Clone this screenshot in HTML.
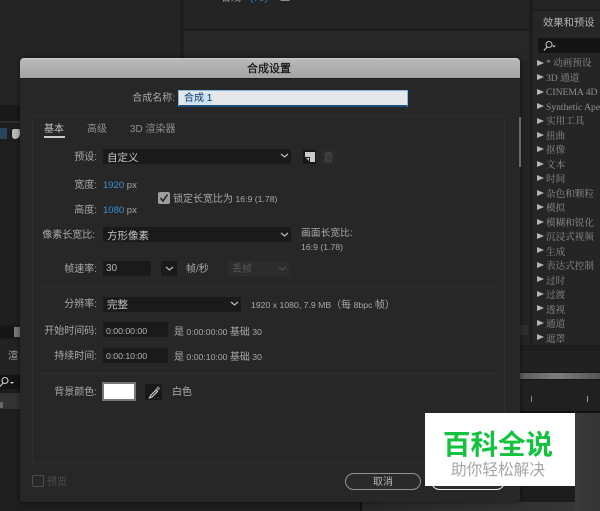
<!DOCTYPE html>
<html lang="zh"><head><meta charset="utf-8"><style>
html,body{margin:0;padding:0;background:#1b1b1b}
#p{position:relative;width:600px;height:511px;overflow:hidden;background:#1d1d1d;font-family:"Liberation Sans","Noto Sans CJK SC",sans-serif;font-size:10px;color:#a8a8a8}
#p div,#p span.t{position:absolute;white-space:nowrap}
.t{line-height:14px}
.t i{font-style:normal;font-size:10px}
.l{text-align:right;width:80px;color:#a8a8a8}
.b{background:#1a1a1a}
.w{color:#c4c4c4}
.v{color:#3d8fd6}
.fx{left:546px;color:#8f8f8f;font-family:"Liberation Serif","Noto Serif CJK SC",serif;font-size:9.6px;line-height:14px}
.ar{left:537px;width:0;height:0;border-left:7px solid #b5b5b5;border-top:3.5px solid transparent;border-bottom:3.5px solid transparent}
svg{position:absolute;overflow:visible}
</style></head><body><div id="p">
<!-- background panels -->
<div style="left:0;top:0;width:180px;height:106px;background:#242424"></div>
<div style="left:184px;top:0;width:345px;height:28px;background:#242424"></div>
<div style="left:184px;top:31px;width:345px;height:30px;background:#272727"></div>
<div style="left:520px;top:61px;width:10px;height:284px;background:#232323"></div>
<div style="left:520px;top:325px;width:8px;height:10px;background:#2e2e2e"></div>
<div style="left:533px;top:0;width:67px;height:9px;background:#242424"></div>
<div style="left:533px;top:11px;width:67px;height:44px;background:#262626"></div>
<div class="t" style="left:221px;top:-8px;color:#999">合成</div>
<div class="t" style="left:250px;top:-8px;color:#3d7fb8">(70)</div>
<div class="t" style="left:280px;top:-8px;color:#999">二</div>
<div class="t" style="left:543px;top:17px;color:#b5b5b5;font-size:10.3px">效果和预设</div>
<div style="left:538px;top:38px;width:62px;height:15px;background:#141414"></div>
<svg style="left:543px;top:40px" width="14" height="12" viewBox="0 0 14 12"><circle cx="6" cy="4.5" r="3" fill="none" stroke="#bbb" stroke-width="1.1"/><path d="M4 7 L1 10.5" stroke="#bbb" stroke-width="1.2"/><path d="M9 5.5h4l-2 2z" fill="#bbb"/></svg>
<div style="left:533px;top:55px;width:67px;height:294px;background:#252525"></div>
<div class="ar" style="top:60px"></div><div class="fx" style="top:57px">* 动画预设</div>
<div class="ar" style="top:74px"></div><div class="fx" style="top:72px">3D 通道</div>
<div class="ar" style="top:89px"></div><div class="fx" style="top:86px">CINEMA 4D</div>
<div class="ar" style="top:103px"></div><div class="fx" style="top:101px">Synthetic Aperture</div>
<div class="ar" style="top:118px"></div><div class="fx" style="top:115px">实用工具</div>
<div class="ar" style="top:132px"></div><div class="fx" style="top:130px">扭曲</div>
<div class="ar" style="top:146px"></div><div class="fx" style="top:144px">抠像</div>
<div class="ar" style="top:161px"></div><div class="fx" style="top:159px">文本</div>
<div class="ar" style="top:175px"></div><div class="fx" style="top:173px">时间</div>
<div class="ar" style="top:190px"></div><div class="fx" style="top:188px">杂色和颗粒</div>
<div class="ar" style="top:204px"></div><div class="fx" style="top:202px">模拟</div>
<div class="ar" style="top:219px"></div><div class="fx" style="top:217px">模糊和锐化</div>
<div class="ar" style="top:233px"></div><div class="fx" style="top:231px">沉浸式视频</div>
<div class="ar" style="top:247px"></div><div class="fx" style="top:246px">生成</div>
<div class="ar" style="top:262px"></div><div class="fx" style="top:260px">表达式控制</div>
<div class="ar" style="top:276px"></div><div class="fx" style="top:275px">过时</div>
<div class="ar" style="top:291px"></div><div class="fx" style="top:289px">过渡</div>
<div class="ar" style="top:305px"></div><div class="fx" style="top:304px">透视</div>
<div class="ar" style="top:320px"></div><div class="fx" style="top:318px">通道</div>
<div class="ar" style="top:334px"></div><div class="fx" style="top:333px">遮罩</div>
<div style="left:520px;top:345px;width:80px;height:6px;background:#1d1d1d"></div>
<div style="left:520px;top:351px;width:80px;height:21px;background:#212121"></div>
<div style="left:520px;top:372px;width:80px;height:8px;background:#171717"></div>
<div style="left:520px;top:373px;width:80px;height:6px;background:linear-gradient(90deg,#5a5a5a,#7d7d7d 45%,#565656)"></div>
<div style="left:520px;top:380px;width:80px;height:32px;background:#202020"></div>
<div style="left:531px;top:396px;width:1px;height:6px;background:#888"></div>
<div style="left:587px;top:396px;width:1px;height:6px;background:#999"></div>
<div style="left:520px;top:411px;width:80px;height:2px;background:#111"></div>
<div style="left:575px;top:413px;width:25px;height:98px;background:linear-gradient(90deg,#3a3a3a,#333)"></div>
<div style="left:362px;top:502px;width:213px;height:9px;background:linear-gradient(90deg,#262626,#363636)"></div>
<div style="left:360px;top:502px;width:2px;height:9px;background:#111"></div>
<!-- left panels -->
<div style="left:0;top:105px;width:20px;height:15px;background:#191919"></div>
<div style="left:0;top:121px;width:20px;height:2px;background:#2a2a2a"></div>
<div style="left:0;top:128px;width:7px;height:11px;background:#27455c"></div>
<div style="left:12px;top:129px;width:8px;height:10px;background:#b8b8b8;border-radius:2px 2px 5px 3px"></div>
<div style="left:0;top:143px;width:20px;height:180px;background:#1f1f1f"></div>
<div style="left:0;top:326px;width:14px;height:12px;background:#151515"></div>
<div style="left:14px;top:327px;width:6px;height:10px;background:#777"></div>
<div style="left:0;top:340px;width:20px;height:34px;background:#232323"></div>
<div class="t" style="left:8px;top:350px;color:#a5a5a5">渲</div>
<div style="left:0;top:375px;width:20px;height:14px;background:#131313"></div>
<svg style="left:0;top:376px" width="16" height="12" viewBox="0 0 16 12"><circle cx="5" cy="4.5" r="3" fill="none" stroke="#ccc" stroke-width="1.1"/><path d="M3 7 L0 10.5" stroke="#ccc" stroke-width="1.2"/><path d="M10 6h4l-2 2z" fill="#ccc"/></svg>
<div style="left:0;top:393px;width:20px;height:16px;background:#333"></div>
<div style="left:0;top:402px;width:3px;height:6px;background:#666"></div>
<div style="left:0;top:413px;width:20px;height:98px;background:#1e1e1e"></div>
<!-- dialog -->
<div style="left:20px;top:58px;width:500px;height:444px;background:#272727;border-radius:4px 4px 3px 3px;box-shadow:0 0 5px rgba(0,0,0,.55);overflow:hidden">
  <div style="left:0;top:0;width:500px;height:20px;background:linear-gradient(#cfcfcf 0,#b8b8b8 2px,#a3a3a3 100%);border-bottom:1px solid #1c1c1c"></div>
</div>
<div class="t" style="left:19px;width:500px;top:62px;text-align:center;color:#111;font-size:11px;-webkit-text-stroke:.25px #111">合成设置</div>
<div class="t l" style="left:95px;top:92px;width:80px;color:#a8a8a8">合成名称:</div>
<div style="left:178px;top:90px;width:230px;height:17px;background:#e5e7e8;border:1px solid #7fb8ea;border-bottom:2px solid #1a4f7d;box-sizing:border-box"></div>
<div class="t" style="left:184px;top:92px;color:#13365a"><span style="background:#cfe3f7">合成 1</span></div>
<div style="left:32px;top:116px;width:473px;height:347px;border:1px solid #2e2e2e;box-sizing:border-box"></div>
<div style="left:519px;top:117px;width:2px;height:50px;background:#6a6a6a"></div>
<div class="t w" style="left:44px;top:123px">基本</div>
<div style="left:44px;top:136px;width:21px;height:2px;background:#c9c9c9"></div>
<div class="t" style="left:87px;top:123px;color:#8f8f8f">高级</div>
<div class="t" style="left:130px;top:123px;color:#8f8f8f">3D 渲染器</div>

<div class="t l" style="left:17px;top:151px">预设:</div>
<div class="b" style="left:103px;top:149px;width:188px;height:15px"></div>
<div class="t w" style="left:107px;top:151px;font-size:10.5px">自定义</div>
<svg style="left:280px;top:153px" width="9" height="6"><path d="M1 1 L4.5 4 L8 1" fill="none" stroke="#bbb" stroke-width="1.2"/></svg>
<div style="left:303px;top:150px;width:13px;height:14px;background:#161616"></div>
<div style="left:305px;top:152px;width:10px;height:10px;background:#c9c9c9"></div>
<svg style="left:305px;top:152px" width="10" height="10"><path d="M0 5h5v5H0z" fill="#161616"/><path d="M1 6l3 3V6z" fill="#c9c9c9"/></svg>
<div style="left:321px;top:149px;width:15px;height:15px;background:#2b2b2b;border-radius:1px"></div>
<svg style="left:324px;top:152px" width="9" height="10"><path d="M0 2h9M3 2V.5h3V2M1.5 2v7.5h6V2" fill="#383838" stroke="#444"/></svg>

<div class="t l" style="left:17px;top:179px">宽度:</div>
<div class="t" style="left:103px;top:179px;font-size:9.5px"><span class="v">1920</span> px</div>
<div class="t l" style="left:17px;top:204px">高度:</div>
<div class="t" style="left:103px;top:204px;font-size:9.5px"><span class="v">1080</span> px</div>
<div style="left:158px;top:192px;width:12px;height:12px;background:#9e9e9e;border-radius:2px"></div>
<svg style="left:159px;top:193px" width="10" height="10"><path d="M1.5 5 L4 8 L8.5 1.5" fill="none" stroke="#1e1e1e" stroke-width="1.5"/></svg>
<div class="t" style="left:173px;top:192px;font-size:8.7px"><i>锁定长宽比为</i> 16:9 (1.78)</div>

<div class="t l" style="left:15px;top:229px">像素长宽比:</div>
<div class="b" style="left:103px;top:227px;width:188px;height:15px"></div>
<div class="t w" style="left:107px;top:229px;font-size:10.5px">方形像素</div>
<svg style="left:280px;top:232px" width="9" height="6"><path d="M1 1 L4.5 4 L8 1" fill="none" stroke="#bbb" stroke-width="1.2"/></svg>
<div class="t" style="left:301px;top:227px;font-size:9.8px">画面长宽比:</div>
<div class="t" style="left:301px;top:240px;font-size:8.7px">16:9 (1.78)</div>

<div class="t l" style="left:17px;top:263px">帧速率:</div>
<div class="b" style="left:103px;top:261px;width:48px;height:15px"></div>
<div class="t" style="left:106px;top:262px;color:#b5b5b5">30</div>
<div class="b" style="left:161px;top:261px;width:16px;height:15px"></div>
<svg style="left:165px;top:266px" width="9" height="6"><path d="M1 1 L4.5 4 L8 1" fill="none" stroke="#bbb" stroke-width="1.2"/></svg>
<div class="t" style="left:186px;top:263px">帧/秒</div>
<div style="left:228px;top:261px;width:62px;height:15px;background:#2c2c2c"></div>
<div class="t" style="left:232px;top:263px;color:#565656">丢帧</div>
<svg style="left:278px;top:266px" width="9" height="6"><path d="M1 1 L4.5 4 L8 1" fill="none" stroke="#4c4c4c" stroke-width="1.2"/></svg>

<div style="left:40px;top:286px;width:456px;height:1px;background:#2f2f2f"></div>
<div class="t l" style="left:17px;top:298px">分辨率:</div>
<div class="b" style="left:103px;top:297px;width:138px;height:15px"></div>
<div class="t w" style="left:107px;top:298px;font-size:10.5px">完整</div>
<svg style="left:230px;top:301px" width="9" height="6"><path d="M1 1 L4.5 4 L8 1" fill="none" stroke="#bbb" stroke-width="1.2"/></svg>
<div class="t" style="left:251px;top:298px;font-size:8.7px">1920 x 1080, 7.9 MB<i>（每</i> 8bpc <i>帧）</i></div>

<div class="t l" style="left:17px;top:325px">开始时间码:</div>
<div class="b" style="left:103px;top:322px;width:65px;height:15px"></div>
<div class="t" style="left:106px;top:324px;color:#b5b5b5;font-size:8.7px">0:00:00:00</div>
<div class="t" style="left:174px;top:325px;font-size:8.7px"><i>是</i> 0:00:00:00 <i>基础</i> 30</div>
<div class="t l" style="left:17px;top:350px">持续时间:</div>
<div class="b" style="left:103px;top:348px;width:65px;height:15px"></div>
<div class="t" style="left:106px;top:349px;color:#b5b5b5;font-size:8.7px">0:00:10:00</div>
<div class="t" style="left:174px;top:350px;font-size:8.7px"><i>是</i> 0:00:10:00 <i>基础</i> 30</div>
<div style="left:40px;top:373px;width:456px;height:1px;background:#2f2f2f"></div>

<div class="t l" style="left:17px;top:386px">背景颜色:</div>
<div style="left:102px;top:382px;width:34px;height:19px;background:#fff;border:2px solid #777;box-sizing:border-box"></div>
<div style="left:145px;top:384px;width:17px;height:16px;background:#181818"></div>
<svg style="left:148px;top:385px" width="13" height="14" viewBox="0 0 13 14"><path d="M8 5 L2.5 10.5 L1.5 13 L4 12 L9.5 6.5z" fill="#282828" stroke="#ddd" stroke-width="1"/><path d="M7.5 4 L10 1 L12.5 3.5 L9.5 6z" fill="#777"/></svg>
<div class="t" style="left:172px;top:386px;color:#b0b0b0">白色</div>

<div style="left:32px;top:475px;width:12px;height:12px;border:1px solid #4b4b4b;border-radius:2px;box-sizing:border-box"></div>
<div class="t" style="left:47px;top:476px;color:#4f4f4f">预览</div>
<div style="left:345px;top:473px;width:76px;height:17px;border:1px solid #939393;border-radius:9px;box-sizing:border-box;background:#2a2a2a"></div>
<div class="t" style="left:345px;width:76px;top:476px;text-align:center;color:#b5b5b5">取消</div>
<div style="left:431px;top:473px;width:74px;height:17px;border:1px solid #eee;border-radius:9px;box-sizing:border-box;background:#2a2a2a"></div>
<!-- watermark -->
<div style="left:425px;top:413px;width:150px;height:73px;background:#fff"></div>
<div style="left:423px;top:424px;width:150px;text-align:center;color:#13c23e;font-size:27.5px;line-height:36px;font-weight:bold;font-family:'Noto Sans CJK SC',sans-serif">百科全说</div>
<div style="left:423px;top:459px;width:150px;text-align:center;color:#a5a5a5;font-size:15.7px;line-height:20px;font-family:'Noto Sans CJK SC',sans-serif">助你轻松解决</div>
</div></body></html>
